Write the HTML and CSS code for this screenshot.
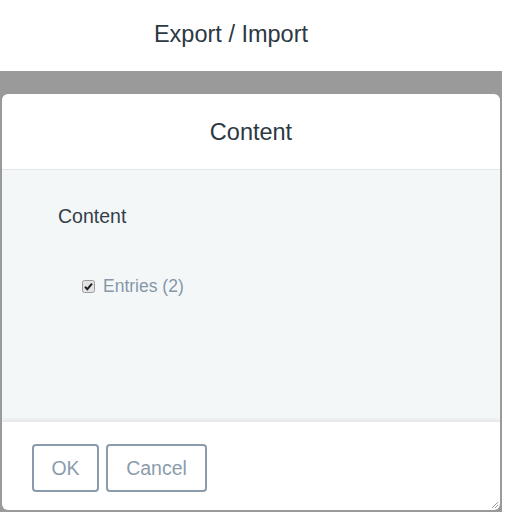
FILE: index.html
```html
<!DOCTYPE html>
<html>
<head>
<meta charset="utf-8">
<link rel="stylesheet" href="styles.css">
</head>
<body>
<div class="page-title">Export / Import</div>
<div class="overlay">
  <div class="dialog">
    <div class="dialog-header">Content</div>
    <div class="dialog-body">
      <div class="section-label">Content</div>
      <div class="check-row">
        <svg class="check" width="13" height="13" viewBox="0 0 13 13"><rect x="0.5" y="0.5" width="12" height="12" rx="2" fill="#e4e4e4" stroke="#9b9b9b"/><path d="M3 6.8 L5.3 9.2 L10 3.6" fill="none" stroke="#222" stroke-width="2"/></svg>
        <span>Entries (2)</span>
      </div>
    </div>
    <div class="dialog-footer">
      <button class="btn btn-ok">OK</button>
      <button class="btn btn-cancel">Cancel</button>
      <svg class="resize" width="10" height="10" viewBox="0 0 10 10"><path d="M9 3 L3 9 M9 6 L6 9" stroke="#9a9a9a" stroke-width="1"/></svg>
    </div>
  </div>
</div>
</body>
</html>
```

FILE: styles.css
```css
html, body {
  margin: 0;
  padding: 0;
  background: #fff;
  font-family: "Liberation Sans", Arial, sans-serif;
  overflow: hidden;
}
.page-title {
  height: 71px;
  line-height: 68px;
  text-align: center;
  font-size: 23.5px;
  color: #2c3842;
  padding-right: 46px;
}
.overlay {
  width: 502px;
  height: 441px;
  background: #999a99;
  padding-top: 23px;
  box-sizing: border-box;
}
.dialog {
  margin-left: 2px;
  width: 498px;
  height: 416px;
  background: #fff;
  border-radius: 6px;
  display: flex;
  flex-direction: column;
  overflow: hidden;
  position: relative;
}
.dialog-header {
  height: 75px;
  border-bottom: 1px solid #e3e7ea;
  text-align: center;
  line-height: 76px;
  font-size: 23.5px;
  color: #2c3842;
}
.dialog-body {
  height: 251px;
  background: #f4f7f8;
  padding: 36px 0 0 56px;
  box-sizing: border-box;
}
.section-label {
  font-size: 19.5px;
  color: #333e48;
  line-height: 20px;
}
.check-row {
  display: flex;
  align-items: center;
  margin-top: 50px;
  margin-left: 24px;
  font-size: 17.5px;
  color: #8597a8;
}
.check {
  margin: 0 8px 0 0;
  flex: none;
}
.dialog-footer {
  flex: 1;
  display: flex;
  align-items: flex-start;
  gap: 7px;
  padding: 22px 0 0 30px;
  box-shadow: 0 -2px 3px rgba(0,0,0,0.06);
  border-top: 1px solid #e6e9eb;
  position: relative;
}
.btn {
  height: 48px;
  border: 2px solid #8a9cac;
  border-radius: 4px;
  background: #fff;
  color: #8a9cac;
  font-family: "Liberation Sans", Arial, sans-serif;
  font-size: 19.5px;
  padding: 0;
}
.btn-ok { width: 67px; }
.btn-cancel { width: 101px; }
.resize {
  position: absolute;
  right: 1px;
  bottom: 1px;
}
```
